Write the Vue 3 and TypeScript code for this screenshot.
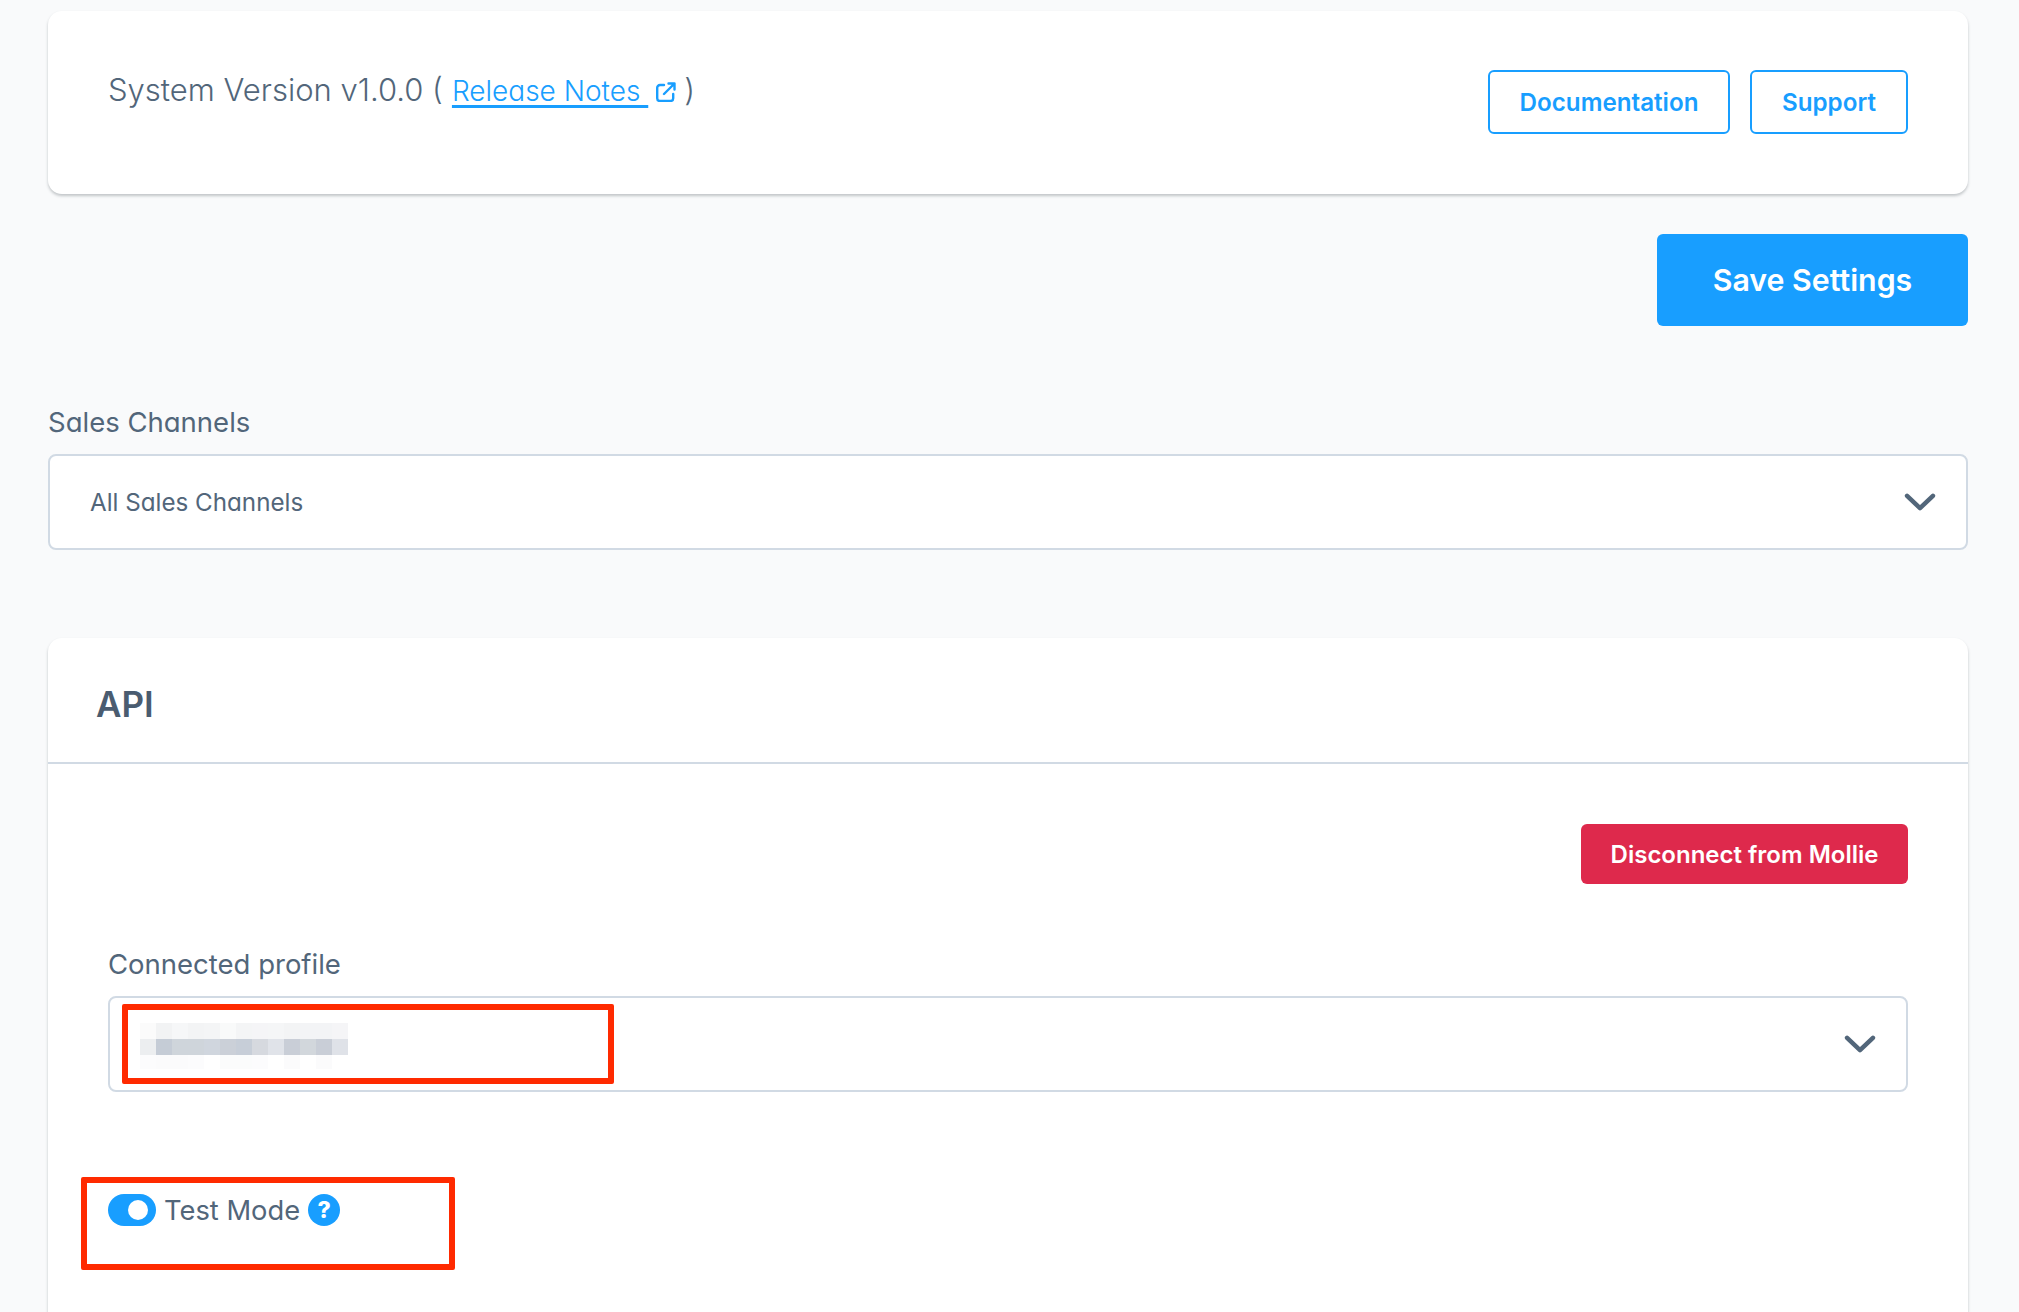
<script setup lang="ts">
const row1 = ['#fbfbfb','#f2f3f4','#f6f7f8','#f3f4f5','#f4f5f6','#f9fafa','#f4f5f6','#f5f5f7','#f5f6f7','#f3f4f5','#f3f4f6','#f3f4f6','#f5f5f7']
const row2 = ['#eceef0','#c5ccd6','#cfd5db','#cfd5db','#d0d6de','#cbd0d8','#c7ced8','#d6d9df','#e0e3e9','#c9ced7','#d2d7dc','#c9ced7','#dfe2e8']
const row3 = ['#fcfcfd','#fbfbfc','#fbfbfc','#fcfcfd','#ffffff','#fbfcfc','#fbfcfc','#fcfcfd','#ffffff','#fbfbfc','#ffffff','#fbfbfc','#ffffff']
const rows: string[][] = [row1, row2, row3]
</script>

<template>
  <div class="page">
    <section class="card version">
      <p class="version-text">
        <span>System Version v1.0.0 (</span>
        <a class="link">Release Notes&nbsp;</a>
        <svg class="ext" viewBox="0 0 20 20" fill="none" stroke="#189eff" stroke-width="2.4" stroke-linecap="round" stroke-linejoin="round">
          <path d="M8 3H4a2.800 2.800 0 0 0-2.800 2.800v10.400A2.800 2.800 0 0 0 4 19h10.400a2.800 2.800 0 0 0 2.800-2.800V12" />
          <path d="M8 12 18.500 1.500M12.500 1.500h6v6" />
        </svg>
        <span>)</span>
      </p>
      <div class="actions">
        <button class="btn-outline doc">Documentation</button>
        <button class="btn-outline sup">Support</button>
      </div>
    </section>

    <div class="save-row">
      <button class="btn-save">Save Settings</button>
    </div>

    <div class="field channels">
      <label class="label">Sales Channels</label>
      <div class="select">
        <span class="select-value">All Sales Channels</span>
        <svg class="chev" viewBox="0 0 28 16" fill="none" stroke="#52667a" stroke-width="4" stroke-linecap="round" stroke-linejoin="round"><path d="M2.5 2.5 14 13.5 25.500 2.500" /></svg>
      </div>
    </div>

    <section class="card api">
      <header class="api-head"><h2>API</h2></header>
      <div class="api-body">
        <div class="disconnect-row"><button class="btn-danger">Disconnect from Mollie</button></div>
        <div class="field profile">
          <label class="label">Connected profile</label>
          <div class="select tall">
            <div class="blur">
              <div v-for="(row, r) in rows" :key="r" class="blur-row">
                <i v-for="(c, i) in row" :key="i" :style="{ background: c }"></i>
              </div>
            </div>
            <svg class="chev" viewBox="0 0 28 16" fill="none" stroke="#52667a" stroke-width="4" stroke-linecap="round" stroke-linejoin="round"><path d="M2.5 2.5 14 13.5 25.500 2.500" /></svg>
            <div class="mark mark-profile"></div>
          </div>
        </div>
        <div class="test-row">
          <span class="toggle"><span class="knob"></span></span>
          <span class="test-label">Test Mode</span>
          <span class="help">?</span>
          <div class="mark mark-test"></div>
        </div>
      </div>
    </section>
  </div>
</template>

<style scoped>
.page {
  box-sizing: border-box;
  height: 1312px;
  overflow: hidden;
  padding: 11px 51px 0 48px;
  background: #f9fafb;
  font-family: Inter, "Noto Sans", sans-serif;
  color: #52667a;
}
.card {
  background: #fff;
  border-radius: 14px;
  box-shadow: 0 2px 3px rgba(50, 60, 70, 0.28);
}
.version {
  height: 183px;
  box-sizing: border-box;
  padding: 59px 60px 0;
  display: flex;
  justify-content: space-between;
  align-items: flex-start;
}
.version-text {
  margin: -1px 0 0;
  font-size: 31px;
  line-height: 40px;
  font-weight: 300;
  display: flex;
  align-items: center;
  white-space: nowrap;
}
.link {
  color: #189eff;
  text-decoration: underline;
  text-decoration-thickness: 3px;
  text-underline-offset: 4px;
  font-size: 28px;
  font-feature-settings: "cv11";
  margin-left: 9px;
  margin-top: 2px;
}
.ext {
  width: 20px;
  height: 20px;
  margin: 4px 8px 0 8px;
}
.actions {
  display: flex;
  gap: 20px;
}
.btn-outline {
  height: 64px;
  box-sizing: border-box;
  background: #fff;
  border: 2px solid #189eff;
  border-radius: 6px;
  color: #189eff;
  font: 600 24.2px Inter, sans-serif;
  padding: 0;
}
.doc { width: 242px; }
.sup { width: 158px; }
.save-row {
  display: flex;
  justify-content: flex-end;
  margin-top: 40px;
}
.btn-save {
  width: 311px;
  height: 92px;
  border: 0;
  border-radius: 6px;
  background: #189eff;
  color: #fff;
  font: 600 30.3px Inter, sans-serif;
}
.field { display: flex; flex-direction: column; }
.channels { margin-top: 79px; }
.label {
  font-size: 27.5px;
  line-height: 34px;
  font-weight: 400;
  font-feature-settings: "cv11";
  margin-bottom: 15px;
}
.select {
  position: relative;
  box-sizing: border-box;
  height: 96px;
  border: 2px solid #d1dae4;
  border-radius: 8px;
  background: #fff;
  display: flex;
  align-items: center;
  justify-content: space-between;
  padding: 0 30px 0 40px;
}
.select-value {
  font-size: 24.2px;
  font-feature-settings: "cv11";
}
.chev { width: 32px; height: 18px; }
.api { margin-top: 88px; height: 800px; }
.api-head {
  height: 126px;
  box-sizing: border-box;
  border-bottom: 2px solid #d1dae4;
  padding-left: 48px;
  display: flex;
  align-items: center;
}
.api-head h2 {
  margin: 8px 0 0;
  font-size: 35px;
  font-weight: 600;
  color: #4a5c70;
}
.api-body { padding: 60px 60px 0; }
.disconnect-row { display: flex; justify-content: flex-end; }
.btn-danger {
  width: 327px;
  height: 60px;
  border: 0;
  border-radius: 6px;
  background: #de294c;
  color: #fff;
  font: 600 24px Inter, sans-serif;
}
.profile { margin-top: 63px; }
.tall { padding-left: 30px; }
.blur { display: flex; flex-direction: column; margin-top: 4px; }
.blur-row { display: flex; }
.blur-row i { display: block; width: 16px; height: 16px; }
.blur-row:last-child i { height: 14px; }
.mark {
  position: absolute;
  box-sizing: border-box;
  border: 6px solid #ff2a00;
  border-radius: 2px;
  pointer-events: none;
}
.mark-profile { left: 12px; top: 6px; width: 492px; height: 80px; }
.test-row {
  position: relative;
  margin-top: 102px;
  display: flex;
  align-items: center;
  height: 32px;
}
.toggle {
  width: 48px;
  height: 32px;
  border-radius: 16px;
  background: #189eff;
  display: flex;
  align-items: center;
  justify-content: flex-end;
  padding-right: 8px;
  box-sizing: border-box;
}
.knob { width: 20px; height: 20px; border-radius: 50%; background: #fff; }
.test-label { font-size: 27.3px; margin-left: 8px; font-weight: 400; }
.help {
  width: 32px;
  height: 32px;
  border-radius: 50%;
  background: #189eff;
  color: #fff;
  margin-left: 8px;
  font-size: 23px;
  font-weight: 800;
  display: flex;
  align-items: center;
  justify-content: center;
}
.mark-test { left: -27px; top: -17px; width: 374px; height: 93px; }
</style>

<style>
html, body { margin: 0; background: #f9fafb; }
</style>
